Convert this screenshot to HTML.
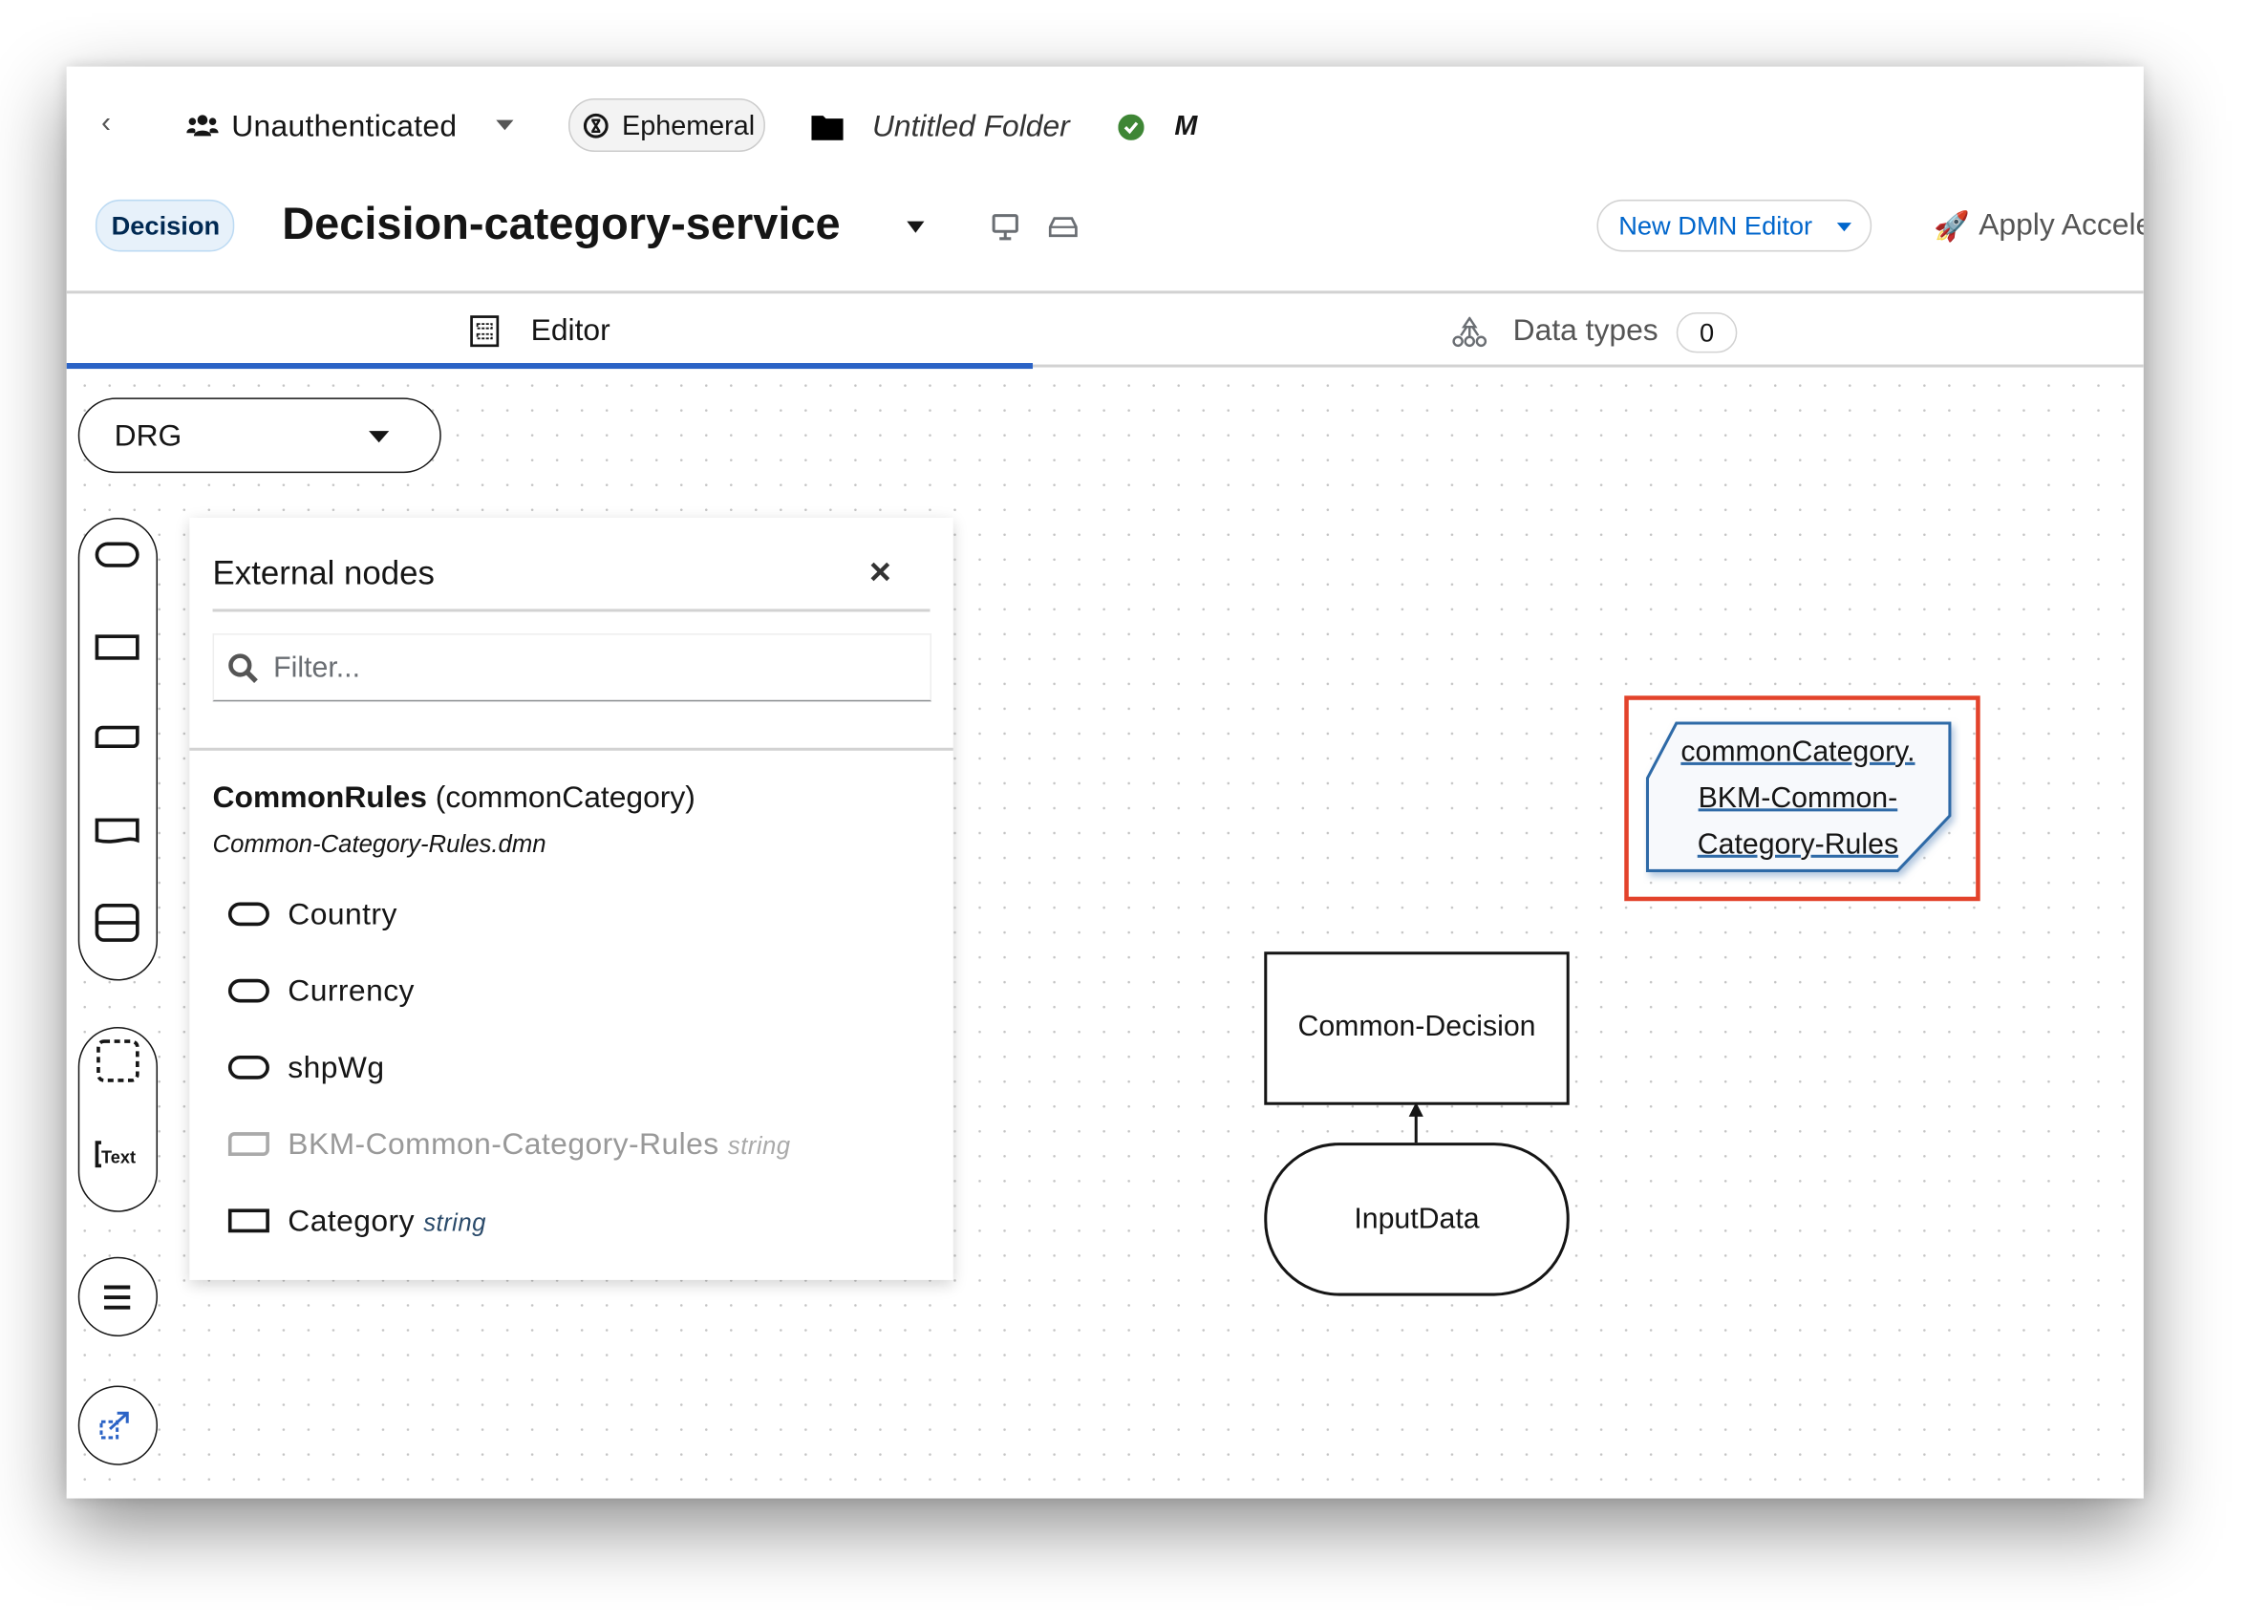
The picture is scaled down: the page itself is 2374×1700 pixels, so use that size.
<!DOCTYPE html>
<html><head><meta charset="utf-8"><style>
html,body{margin:0;padding:0;width:2374px;height:1700px;overflow:hidden;background:#fff;}
#s{position:absolute;left:0;top:0;width:1568px;height:1123px;transform:scale(1.51403);transform-origin:0 0;font-family:"Liberation Sans",sans-serif;color:#151515;}
.win{position:absolute;left:46px;top:46px;width:1436px;height:990px;background:#fff;overflow:hidden;box-shadow:0 20px 50px rgba(0,0,0,.45),0 0 10px rgba(0,0,0,.15);}
.a{position:absolute;white-space:nowrap;}
.canvas{position:absolute;left:0;top:208px;width:1436px;height:782px;background-image:radial-gradient(circle,#c4c4c4 0.7px,transparent 1px);background-size:17.2px 17.2px;background-position:4px 4px;}
.tool{position:absolute;border:1.5px solid #151515;border-radius:28px;background:#fff;}
</style></head><body>
<div id="s">
<div class="win">
 <div class="a" style="left:24px;top:28px;font-size:20px;color:#555">‹</div>
 <svg class="a" style="left:83px;top:33px" width="22" height="16" viewBox="0 0 22 16"><circle cx="11" cy="4" r="3.5" fill="#151515"/><circle cx="4" cy="5" r="2.5" fill="#151515"/><circle cx="18" cy="5" r="2.5" fill="#151515"/><path d="M5 15c0-5 12-5 12 0z" fill="#151515"/><path d="M0 13c0-4 6-4 6-2v2z M22 13c0-4-6-4-6-2v2z" fill="#151515"/></svg>
 <div class="a" style="left:114px;top:30px;font-size:21px;letter-spacing:0.2px">Unauthenticated</div>
 <div class="a" style="left:297px;top:37px;width:0;height:0;border-left:6px solid transparent;border-right:6px solid transparent;border-top:7px solid #555"></div>
 <div class="a" style="left:347px;top:22px;width:134px;height:35px;border:1.5px solid #ccc;border-radius:18px;background:#f3f3f3"></div>
 <svg class="a" style="left:357px;top:32px" width="18" height="18" viewBox="0 0 18 18"><circle cx="9" cy="9" r="7.5" fill="none" stroke="#151515" stroke-width="2"/><path d="M6 5h6M6 13h6M6.5 5l5 8M11.5 5l-5 8" stroke="#151515" stroke-width="1.6" fill="none"/></svg>
 <div class="a" style="left:384px;top:31px;font-size:19px">Ephemeral</div>
 <svg class="a" style="left:515px;top:33px" width="22" height="18" viewBox="0 0 22 18"><path d="M0 1h8l2 2h12v15H0z" fill="#000"/></svg>
 <div class="a" style="left:557px;top:30px;font-size:21px;font-style:italic;color:#333">Untitled Folder</div>
 <svg class="a" style="left:727px;top:33px" width="18" height="18" viewBox="0 0 18 18"><circle cx="9" cy="9" r="9" fill="#3e8635"/><path d="M5 9l3 3 5-6" stroke="#fff" stroke-width="2.2" fill="none"/></svg>
 <div class="a" style="left:766px;top:31px;font-size:19px;font-style:italic;font-weight:bold">M</div>
 <div class="a" style="left:20px;top:92px;width:94px;height:34px;border:1.5px solid #bcdaf3;border-radius:17px;background:#e7f1fa"></div>
 <div class="a" style="left:31px;top:100px;font-size:18px;font-weight:bold;color:#002952">Decision</div>
 <div class="a" style="left:149px;top:91px;font-size:31px;font-weight:bold">Decision-category-service</div>
 <div class="a" style="left:581px;top:107px;width:0;height:0;border-left:6px solid transparent;border-right:6px solid transparent;border-top:8px solid #151515"></div>
 <svg class="a" style="left:639px;top:101px" width="20" height="20" viewBox="0 0 20 20"><rect x="2" y="2" width="16" height="11" rx="1" fill="none" stroke="#6a6e73" stroke-width="2"/><path d="M10 13v4M6 18h8" stroke="#6a6e73" stroke-width="2"/></svg>
 <svg class="a" style="left:679px;top:103px" width="20" height="16" viewBox="0 0 20 16"><path d="M4 2h12l3 6v6H1V8z" fill="none" stroke="#6a6e73" stroke-width="1.8"/><path d="M1 8h18" stroke="#6a6e73" stroke-width="1.5"/></svg>
 <div class="a" style="left:1058px;top:92px;width:188px;height:34px;border:1.5px solid #d2d2d2;border-radius:18px"></div>
 <div class="a" style="left:1073px;top:100px;font-size:18px;color:#06c">New DMN Editor</div>
 <div class="a" style="left:1224px;top:108px;width:0;height:0;border-left:5px solid transparent;border-right:5px solid transparent;border-top:6px solid #06c"></div>
 <div class="a" style="left:1291px;top:98px;font-size:20px">🚀</div>
 <div class="a" style="left:1322px;top:98px;font-size:21px;color:#555">Apply Accelerator</div>
 <div class="a" style="left:0;top:155px;width:1436px;height:1.5px;background:#d2d2d2"></div>
 <svg class="a" style="left:278px;top:172px" width="22" height="22" viewBox="0 0 22 22"><rect x="2" y="1" width="18" height="20" fill="none" stroke="#151515" stroke-width="1.8"/><path d="M6 6h10v3H6zM6 13h10v3H6z" fill="none" stroke="#151515" stroke-width="1.2" stroke-dasharray="2 1"/></svg>
 <div class="a" style="left:321px;top:171px;font-size:21px">Editor</div>
 <svg class="a" style="left:958px;top:173px" width="24" height="22" viewBox="0 0 24 22"><path d="M12 1l4 6H8z" fill="none" stroke="#6a6e73" stroke-width="1.6"/><circle cx="4" cy="17" r="3" fill="none" stroke="#6a6e73" stroke-width="1.6"/><circle cx="12" cy="17" r="3" fill="none" stroke="#6a6e73" stroke-width="1.6"/><circle cx="20" cy="17" r="3" fill="none" stroke="#6a6e73" stroke-width="1.6"/><path d="M12 7v7M6 13l4-6M18 13l-4-6" fill="none" stroke="#6a6e73" stroke-width="1.6"/></svg>
 <div class="a" style="left:1000px;top:171px;font-size:21px;color:#555">Data types</div>
 <div class="a" style="left:1113px;top:170px;width:40px;height:26px;border:1.5px solid #d2d2d2;border-radius:14px;text-align:center;font-size:18px;line-height:26px">0</div>
 <div class="canvas"></div>
 <div class="a" style="left:0;top:206px;width:1436px;height:1.5px;background:#d2d2d2"></div>
 <div class="a" style="left:0;top:205px;width:668px;height:4px;background:#2b63c6"></div>
 <div class="a" style="left:8px;top:229px;width:249px;height:50px;border:1.5px solid #151515;border-radius:26px;background:#fff"></div>
 <div class="a" style="left:33px;top:244px;font-size:21px">DRG</div>
 <div class="a" style="left:209px;top:252px;width:0;height:0;border-left:7px solid transparent;border-right:7px solid transparent;border-top:8px solid #151515"></div>
 <div class="tool" style="left:8px;top:312px;width:53px;height:318px"></div>
 <svg class="a" style="left:8px;top:312px" width="56" height="320" viewBox="0 0 56 320" fill="none" stroke="#151515" stroke-width="2.4"><rect x="13" y="18" width="28" height="15" rx="7.5"/><rect x="13" y="82" width="28" height="15"/><path d="M17 145h24v10a3 3 0 0 1-3 3H13v-9a4 4 0 0 1 4-4z"/><path d="M13 209h28v14c-8-3-14 3-28 0z"/><rect x="13" y="268" width="28" height="24" rx="5"/><path d="M13 280h28"/></svg>
 <div class="tool" style="left:8px;top:664px;width:53px;height:126px"></div>
 <svg class="a" style="left:8px;top:664px" width="56" height="130" viewBox="0 0 56 130" fill="none" stroke="#151515" stroke-width="2.4"><rect x="14" y="10" width="27" height="27" rx="4" stroke-dasharray="4 3"/><path d="M16 80h-3v16h3"/></svg>
 <div class="a" style="left:24px;top:747px;font-size:12px;font-weight:bold">Text</div>
 <div class="tool" style="left:8px;top:823px;width:53px;height:53px;border-radius:50%"></div>
 <svg class="a" style="left:24px;top:841px" width="22" height="20"><path d="M2 3h18M2 10h18M2 17h18" stroke="#151515" stroke-width="2.6"/></svg>
 <div class="tool" style="left:8px;top:912px;width:53px;height:53px;border-radius:50%"></div>
 <svg class="a" style="left:22px;top:927px" width="26" height="24" viewBox="0 0 26 24" fill="none" stroke="#2b63c6" stroke-width="2"><rect x="2" y="10" width="11" height="11" stroke-dasharray="3 2"/><path d="M8 15L20 4M13 4h7v7" /></svg>
 <div class="a" style="left:85px;top:312px;width:528px;height:527px;background:#fff;box-shadow:0 3px 10px rgba(0,0,0,.18)"></div>
 <div class="a" style="left:101px;top:337px;font-size:23px">External nodes</div>
 <div class="a" style="left:555px;top:334px;font-size:26px;color:#333;font-weight:bold">×</div>
 <div class="a" style="left:101px;top:375px;width:496px;height:1.5px;background:#d2d2d2"></div>
 <div class="a" style="left:101px;top:392px;width:495px;height:45px;border:1px solid #eee;border-bottom:1.5px solid #8a8d90"></div>
 <svg class="a" style="left:111px;top:405px" width="22" height="22" viewBox="0 0 22 22"><circle cx="9" cy="9" r="6.5" fill="none" stroke="#555" stroke-width="3"/><path d="M14 14l6 6" stroke="#555" stroke-width="3.5"/></svg>
 <div class="a" style="left:143px;top:405px;font-size:20px;color:#6a6e73">Filter...</div>
 <div class="a" style="left:85px;top:471px;width:528px;height:1.5px;background:#d2d2d2"></div>
 <div class="a" style="left:101px;top:494px;font-size:21px"><b>CommonRules</b> (commonCategory)</div>
 <div class="a" style="left:101px;top:528px;font-size:17px;font-style:italic">Common-Category-Rules.dmn</div>
 <svg class="a" style="left:110px;top:575px" width="32" height="240" viewBox="0 0 32 240" fill="none" stroke-width="2.4"><rect x="3" y="4" width="26" height="14" rx="7" stroke="#151515"/><rect x="3" y="57" width="26" height="14" rx="7" stroke="#151515"/><rect x="3" y="110" width="26" height="14" rx="7" stroke="#151515"/><path d="M6 163h23v11a3 3 0 0 1-3 3H3v-11a3 3 0 0 1 3-3z" stroke="#aaa"/><rect x="3" y="216" width="26" height="14" stroke="#151515"/></svg>
 <div class="a" style="left:153px;top:575px;font-size:21px;letter-spacing:0.3px">Country</div>
 <div class="a" style="left:153px;top:628px;font-size:21px;letter-spacing:0.3px">Currency</div>
 <div class="a" style="left:153px;top:681px;font-size:21px;letter-spacing:0.3px">shpWg</div>
 <div class="a" style="left:153px;top:734px;font-size:21px;color:#999;letter-spacing:0.3px">BKM-Common-Category-Rules <i style="font-size:17px;color:#aaa">string</i></div>
 <div class="a" style="left:153px;top:787px;font-size:21px;letter-spacing:0.3px">Category <i style="font-size:17px;color:#2a4a6a">string</i></div>
 <div class="a" style="left:1077px;top:435px;width:240px;height:136px;border:3px solid #e3432b"></div>
 <svg class="a" style="left:1090px;top:450px" width="220" height="115" viewBox="0 0 220 115"><defs><filter id="f"><feDropShadow dx="2" dy="3" stdDeviation="2.5" flood-color="#7fa0c8" flood-opacity=".6"/></filter></defs><path d="M23 4H212V68L176 106H3V42z" fill="#f7f9fc" stroke="#2f6aa7" stroke-width="2" filter="url(#f)"/></svg>
 <div class="a" style="left:1097px;top:458px;width:200px;text-align:center;font-size:20px;line-height:32px;text-decoration:underline;text-decoration-color:#2f6aa7">commonCategory.<br>BKM-Common-<br>Category-Rules</div>
 <div class="a" style="left:828px;top:612px;width:207px;height:102px;border:2px solid #151515;background:#fff"></div>
 <div class="a" style="left:828px;top:653px;width:211px;text-align:center;font-size:20px">Common-Decision</div>
 <div class="a" style="left:932px;top:724px;width:1.5px;height:20px;background:#151515"></div>
 <div class="a" style="left:928px;top:716px;width:0;height:0;border-left:5px solid transparent;border-right:5px solid transparent;border-bottom:10px solid #151515"></div>
 <div class="a" style="left:828px;top:744px;width:207px;height:102px;border:2px solid #151515;border-radius:52px;background:#fff"></div>
 <div class="a" style="left:828px;top:786px;width:211px;text-align:center;font-size:20px">InputData</div>
</div>
</div>
</body></html>
